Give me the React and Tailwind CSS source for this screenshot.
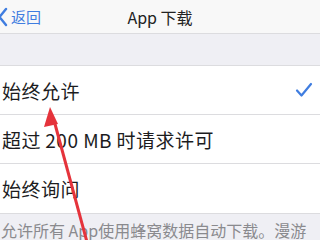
import React from 'react';

function Row({ label, checked, last }) {
  return (
    <div className={`h-[49px] flex items-center justify-between pl-[2px] pr-[6px] ${last ? '' : 'border-b border-[#dcdcdf]'}`}>
      <span className="text-[19px] text-[#1c1c1e] leading-none tracking-[0.5px]">{label}</span>
      {checked && (
        <svg width="18" height="16" viewBox="0 0 18 16" className="mr-[1px]">
          <path d="M2 8.5 L6.5 13.5 L16 2" fill="none" stroke="#3f7de0" strokeWidth="2.2" strokeLinecap="round" strokeLinejoin="round" />
        </svg>
      )}
    </div>
  );
}

export default function App() {
  return (
    <div
      className="relative w-[320px] h-[240px] overflow-hidden bg-[#efeff4]"
      style={{ fontFamily: '"Noto Sans CJK SC", "Noto Sans", sans-serif' }}
    >
      {/* nav bar */}
      <div className="relative h-[34px] bg-[#f8f8f8] border-b border-[#dcdcdf] flex items-center">
        <div className="flex items-center text-[#3f7de0]">
          <svg width="10" height="20" viewBox="0 0 10 20" className="-ml-[2px]">
            <path d="M8 2 L1.5 10 L8 18" fill="none" stroke="#3f7de0" strokeWidth="2.4" strokeLinecap="round" strokeLinejoin="round" />
          </svg>
          <span className="ml-[3px] text-[15px] leading-none">返回</span>
        </div>
        <div className="absolute inset-0 flex items-center justify-center text-[16px] text-[#222] leading-none">
          App 下载
        </div>
      </div>

      <div className="h-[32px] border-b border-[#dcdcdf]" />

      <div className="bg-white border-b border-[#dcdcdf]">
        <Row label="始终允许" checked />
        <Row label={'超过\u2009200 MB\u2009时请求许可'} />
        <Row label="始终询问" last />
      </div>

      <div className="pl-[1px] pt-[8px] text-[16px] text-[#8a8a8e] leading-none whitespace-nowrap">
        允许所有 App使用蜂窝数据自动下载。漫游
      </div>

      {/* red annotation arrow */}
      <svg className="absolute left-0 top-0" width="320" height="240" viewBox="0 0 320 240">
        <line x1="55" y1="124" x2="87" y2="242" stroke="#e5333b" strokeWidth="3" />
        <polygon points="50,107 44,127 58,124" fill="#e5333b" />
      </svg>
    </div>
  );
}
